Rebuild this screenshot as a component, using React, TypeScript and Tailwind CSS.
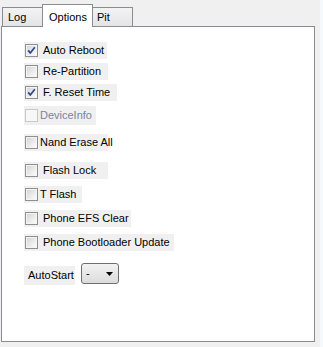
import React from "react";

function Box({ checked, disabled }: { checked?: boolean; disabled?: boolean }) {
  return (
    <svg width="13" height="13" viewBox="0 0 13 13" className="shrink-0">
      <defs>
        <linearGradient id="cbg" x1="0" y1="0" x2="1" y2="1">
          <stop offset="0" stopColor="#d6d6d6" />
          <stop offset="1" stopColor="#fbfbfb" />
        </linearGradient>
      </defs>
      <rect x="0.5" y="0.5" width="12" height="12" fill={disabled ? "#f7f7f7" : "#f4f4f4"} stroke={disabled ? "#c9c9c9" : "#8e8f8f"} />
      {!disabled && <rect x="2" y="2" width="9" height="9" fill="url(#cbg)" />}
      {checked && (
        <path d="M3.2 6.4 L5.3 9 L9.8 3.3" fill="none" stroke="#31448a" strokeWidth="1.7" strokeLinejoin="round" />
      )}
    </svg>
  );
}

function Row({
  label,
  checked,
  disabled,
  className,
  textClass,
}: {
  label: string;
  checked?: boolean;
  disabled?: boolean;
  className: string;
  textClass: string;
}) {
  return (
    <div className={"flex items-center bg-[#f0f0f0] " + className}>
      <div className="ml-[1px] flex">
        <Box checked={checked} disabled={disabled} />
      </div>
      <span className={"whitespace-nowrap leading-none " + textClass + (disabled ? " text-[#7d82a0]" : " text-black")}>
        {label}
      </span>
    </div>
  );
}

export default function App() {
  return (
    <div
      className="flex w-[323px] h-[347px] bg-[#f0f0f0] text-[11px] overflow-hidden"
      style={{ fontFamily: '"Liberation Sans", Arial, sans-serif' }}
    >
      <div className="flex flex-col pl-[1px] w-[320px]">
        <div className="flex items-end h-[26px] pl-[1px]">
          <div className="flex items-center w-[41px] h-[19px] border border-b-0 border-[#898c95] bg-gradient-to-b from-[#f3f3f3] to-[#e4e4e4] pl-[5px] text-black">
            Log
          </div>
          <div className="relative z-10 -mb-px flex items-start pt-[4px] w-[51px] h-[23px] border border-b-0 border-[#898c95] bg-white pl-[6px] text-black -ml-px">
            Options
          </div>
          <div className="flex items-center w-[40px] h-[19px] border border-b-0 border-l-0 border-[#898c95] bg-gradient-to-b from-[#f3f3f3] to-[#e4e4e4] pl-[4px] text-black">
            Pit
          </div>
        </div>
        <div className="w-[314px] h-[316px] border border-[#898c95] bg-white flex flex-col pl-[22px] pt-[15px]">
          <Row label="Auto Reboot" checked className="w-[83px] h-[17px]" textClass="ml-[5px]" />
          <Row label="Re-Partition" className="mt-[4px] w-[84px] h-[17px]" textClass="ml-[5px]" />
          <Row label="F. Reset Time" checked className="mt-[4px] w-[93px] h-[17px]" textClass="ml-[5px]" />
          <Row label="DeviceInfo" disabled className="mt-[5px] w-[72px] h-[19px]" textClass="ml-[2px]" />
          <Row label="Nand Erase All" className="mt-[9px] w-[84px] h-[17px]" textClass="ml-[2px]" />
          <Row label="Flash Lock" className="mt-[11px] w-[84px] h-[17px]" textClass="ml-[5px]" />
          <Row label="T Flash" className="mt-[7px] w-[58px] h-[17px]" textClass="ml-[2px]" />
          <Row label="Phone EFS Clear" className="mt-[7px] w-[107px] h-[17px]" textClass="ml-[5px]" />
          <Row label="Phone Bootloader Update" className="mt-[7px] w-[150px] h-[17px]" textClass="ml-[5px]" />
          <div className="mt-[12px] flex items-start">
            <div className="mt-[3px] flex items-center w-[51px] h-[19px] bg-[#f0f0f0] pl-[4px] text-black">
              AutoStart
            </div>
            <div className="ml-[6px] flex items-center justify-between w-[38px] h-[21px] rounded-[3px] border border-[#707070] bg-gradient-to-b from-[#f2f2f2] to-[#dcdcdc] pl-[4px] pr-[5px] text-black">
              <span className="leading-none">-</span>
              <svg width="7" height="4" viewBox="0 0 7 4">
                <path d="M0 0 H7 L3.5 4 Z" fill="#000" />
              </svg>
            </div>
          </div>
        </div>
      </div>
      <div className="w-[3px] h-full bg-[#f6f9fc] ml-auto" />
    </div>
  );
}
